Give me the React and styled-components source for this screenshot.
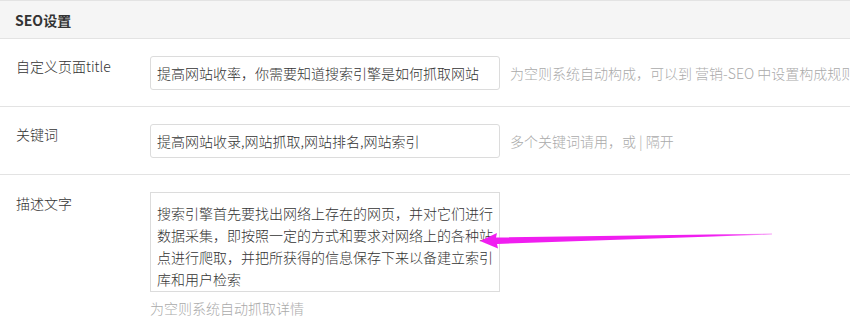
import React from 'react';
import styled, { createGlobalStyle } from 'styled-components';

const GlobalStyle = createGlobalStyle`
  html, body {
    margin: 0;
    padding: 0;
    background: #fff;
  }
  body {
    font-family: "Noto Sans CJK SC", "Noto Sans", sans-serif;
    font-size: 14px;
    font-weight: 300;
    color: #333;
    overflow: hidden;
  }
`;

const Panel = styled.div`
  position: relative;
  width: 850px;
  height: 330px;
  overflow: hidden;
`;

const Header = styled.div`
  height: 37px;
  display: flex;
  align-items: center;
  padding-left: 15px;
  background: #f5f5f5;
  border-top: 1px solid #e3e3e3;
  border-bottom: 1px solid #e3e3e3;
  font-weight: bold;
  font-size: 14px;
  color: #333;
`;

const Row = styled.div`
  display: flex;
  align-items: flex-start;
  padding: 17px 0 ${(p) => (p.last ? '0' : '16px')} 16px;
  border-bottom: ${(p) => (p.last ? 'none' : '1px solid #e3e3e3')};
`;

const Label = styled.div`
  width: 134px;
  flex-shrink: 0;
  line-height: 20px;
  padding-top: ${(p) => p.offset || 0}px;
  color: #333;
  white-space: nowrap;
`;

const Field = styled.div`
  display: flex;
  flex-direction: column;
`;

const Line = styled.div`
  display: flex;
  align-items: center;
`;

const Input = styled.input`
  box-sizing: border-box;
  width: 350px;
  height: 34px;
  padding: 0 6px;
  border: 1px solid #dcdcdc;
  border-radius: 3px;
  font: inherit;
  font-size: 14px;
  color: #333;
  outline: none;
  background: #fff;
`;

const TextArea = styled.textarea`
  box-sizing: border-box;
  width: 350px;
  height: 100px;
  padding: 9px 4px 0 6px;
  border: 1px solid #dcdcdc;
  border-radius: 0;
  font: inherit;
  font-size: 14px;
  line-height: 22px;
  color: #333;
  resize: none;
  outline: none;
  overflow: hidden;
  white-space: pre-wrap;
`;

const Hint = styled.span`
  color: #aaa;
  white-space: nowrap;
  margin-left: ${(p) => (p.below ? 0 : 10)}px;
  margin-top: ${(p) => (p.below ? 6 : 0)}px;
  line-height: 20px;
`;

const Arrow = styled.svg`
  position: absolute;
  left: 0;
  top: 0;
  pointer-events: none;
`;

const description =
  '搜索引擎首先要找出网络上存在的网页，并对它们进行\n数据采集，即按照一定的方式和要求对网络上的各种站\n点进行爬取，并把所获得的信息保存下来以备建立索引\n库和用户检索';

export default function App() {
  return (
    <Panel>
      <GlobalStyle />
      <Header>SEO设置</Header>
      <Row>
        <Label>自定义页面title</Label>
        <Line>
          <Input defaultValue="提高网站收率，你需要知道搜索引擎是如何抓取网站" />
          <Hint>为空则系统自动构成，可以到 营销-SEO 中设置构成规则</Hint>
        </Line>
      </Row>
      <Row>
        <Label>关键词</Label>
        <Line>
          <Input defaultValue="提高网站收录,网站抓取,网站排名,网站索引" />
          <Hint>多个关键词请用，或 | 隔开</Hint>
        </Line>
      </Row>
      <Row last>
        <Label offset={1}>描述文字</Label>
        <Field>
          <TextArea defaultValue={description} />
          <Hint below>为空则系统自动抓取详情</Hint>
        </Field>
      </Row>
      <Arrow width="850" height="330" viewBox="0 0 850 330">
        <defs>
          <linearGradient id="tail" x1="480" y1="0" x2="772" y2="0" gradientUnits="userSpaceOnUse">
            <stop offset="0" stopColor="#f01ef0" />
            <stop offset="0.8" stopColor="#f01ef0" />
            <stop offset="1" stopColor="#f7a0f7" />
          </linearGradient>
        </defs>
        <polygon
          points="480,241 497,233 496,237.5 772,233.6 772,234.6 497,244 498,248.5"
          fill="url(#tail)"
        />
      </Arrow>
    </Panel>
  );
}
